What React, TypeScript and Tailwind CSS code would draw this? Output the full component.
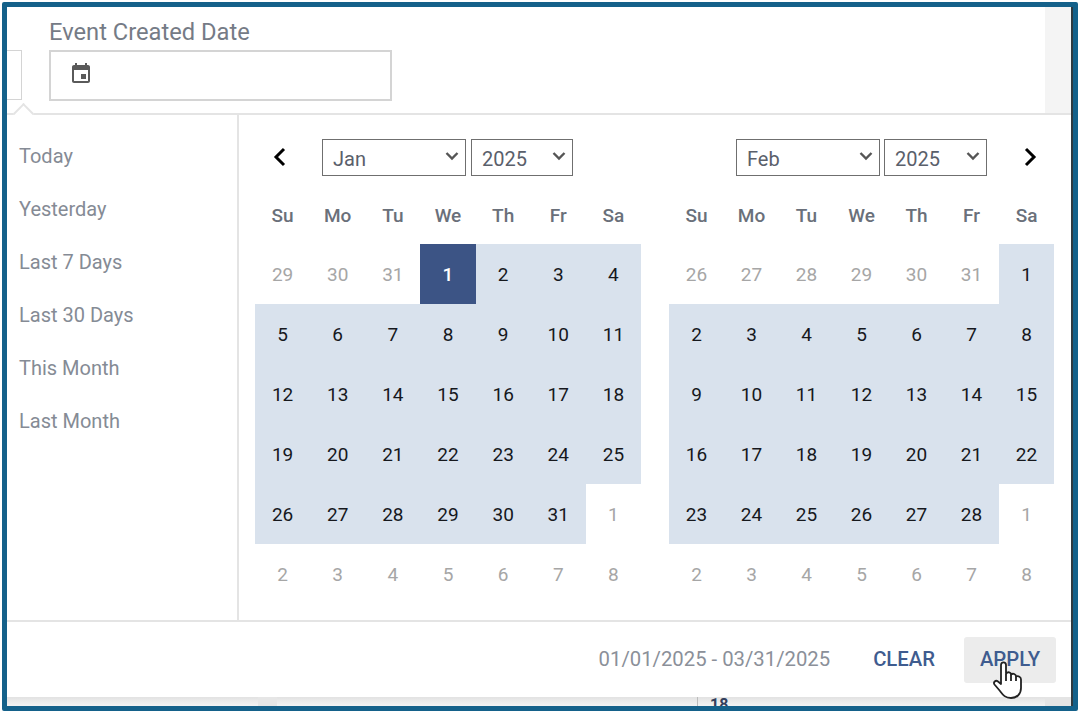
const weekdays = ["Su", "Mo", "Tu", "We", "Th", "Fr", "Sa"];
const presets = ["Today", "Yesterday", "Last 7 Days", "Last 30 Days", "This Month", "Last Month"];

type Day = { n: number; out?: boolean; start?: boolean };

function range(from: number, to: number, out?: boolean): Day[] {
  const days: Day[] = [];
  for (let i = from; i <= to; i++) days.push({ n: i, out });
  return days;
}

const jan: Day[] = [
  ...range(29, 31, true),
  { n: 1, start: true },
  ...range(2, 31),
  ...range(1, 8, true),
];
const feb: Day[] = [
  ...range(26, 31, true),
  ...range(1, 28),
  ...range(1, 8, true),
];

function Select({ label, width }: { label: string; width: string }) {
  return (
    <div className={`${width} h-[37px] border border-[#6f6f6f] flex items-center justify-between pl-[10px] pr-[5px] text-[20px] text-[#5a606b] bg-white`}>
      <span className="pt-[4px]">{label}</span>
      <svg width="16" height="16" viewBox="0 0 16 16" fill="none" stroke="#555" strokeWidth="2.4" className="mb-[3px]">
        <path d="M2.5 5l5.5 5.5L13.5 5" />
      </svg>
    </div>
  );
}

function Month({ days, width }: { days: Day[]; width: string }) {
  return (
    <div className={width}>
      <div className="grid grid-cols-7 h-[60px] pt-[4px] items-center text-center text-[19px] font-medium text-[#6a707a]">
        {weekdays.map((d) => (
          <span key={d}>{d}</span>
        ))}
      </div>
      <div className="grid grid-cols-7 auto-rows-[60px] text-[19px]">
        {days.map((d, i) => (
          <div
            key={i}
            className={
              "flex items-center justify-center pt-[2px] " +
              (d.start
                ? "bg-[#3c5485] text-white font-medium"
                : d.out
                  ? "text-[#a6a6a6]"
                  : "bg-[#d9e2ed] text-[#16181d]")
            }
          >
            {d.n}
          </div>
        ))}
      </div>
    </div>
  );
}

export default function App() {
  return (
    <div className="relative w-[1080px] h-[712px] bg-white pl-[2px] pt-[2px] font-['Roboto',sans-serif]">
      <div className="w-[1076px] h-[709px] border-[5px] border-[#14618a] rounded-[2px] bg-white overflow-hidden">
        <div className="h-full border-r-2 border-[#2f3a40] flex flex-col">
          {/* field row */}
          <div className="relative h-[108px] flex shrink-0 border-b-2 border-[#e4e4e4]">
            <div className="w-[15px] h-[50px] mt-[43px] border border-l-0 border-[#d4d4d4]" />
            <div className="pl-[27px] flex-1">
              <div className="h-[43px] pt-[10px] text-[23.7px] leading-[30px] text-[#757b86]">Event Created Date</div>
              <div className="w-[343px] h-[51px] border-2 border-[#d4d4d4] pl-[18px] flex items-center">
                <svg width="24" height="24" viewBox="0 0 24 24" fill="#5a5a5a" className="mb-[4px]">
                  <path d="M17 12h-5v5h5v-5zM16 1v2H8V1H6v2H5c-1.11 0-1.99.9-1.99 2L3 19c0 1.1.89 2 2 2h14c1.1 0 2-.9 2-2V5c0-1.1-.9-2-2-2h-1V1h-2zm3 18H5V8h14v11z" />
                </svg>
              </div>
            </div>
            <div className="w-[26px] bg-[#f4f4f4]" />
            {/* caret over the line */}
            <div className="absolute left-[9px] top-[99px] w-[15px] h-[15px] rotate-45 bg-white border-l-2 border-t-2 border-[#e4e4e4]" />
          </div>

          {/* calendar body */}
          <div className="flex h-[507px] shrink-0 border-b-2 border-[#e4e4e4]">
            <div className="w-[232px] border-r-2 border-[#e4e4e4] pl-[12px] pt-[14px] shrink-0">
              {presets.map((p) => (
                <div key={p} className="h-[53px] flex items-center text-[20px] text-[#858b95]">
                  {p}
                </div>
              ))}
            </div>
            <div className="flex-1 pl-[16px]">
              <div className="flex items-center h-[69px] pt-[15px] w-[800px]">
                <svg width="16" height="20" viewBox="0 0 16 20" fill="none" stroke="#000" strokeWidth="3" className="ml-[17px] mr-[34px]">
                  <path d="M12 2L4 10l8 8" />
                </svg>
                <Select label="Jan" width="w-[144px]" />
                <div className="w-[5px]" />
                <Select label="2025" width="w-[102px]" />
                <div className="w-[163px]" />
                <Select label="Feb" width="w-[144px]" />
                <div className="w-[4px]" />
                <Select label="2025" width="w-[103px]" />
                <svg width="16" height="20" viewBox="0 0 16 20" fill="none" stroke="#000" strokeWidth="3" className="ml-[35px]">
                  <path d="M4 2l8 8-8 8" />
                </svg>
              </div>
              <div className="flex gap-[28px]">
                <Month days={jan} width="w-[386px]" />
                <Month days={feb} width="w-[385px]" />
              </div>
            </div>
          </div>

          {/* footer */}
          <div className="h-[75px] flex items-center justify-end pr-[15px] shrink-0">
            <span className="text-[20.3px] text-[#8b9099] mr-[43px]">01/01/2025 - 03/31/2025</span>
            <span className="text-[20.3px] font-medium text-[#3f5c8f] mr-[29px]">CLEAR</span>
            <div className="w-[92px] h-[46px] rounded-[3px] bg-[#ececec] flex items-center justify-center text-[20.3px] font-medium text-[#3f5c8f]">
              APPLY
            </div>
          </div>

          {/* what's left of the page under the popup */}
          <div className="flex-1 flex overflow-hidden bg-linear-to-b from-[#e2e2e2] to-[#f3f3f3]">
            <div className="ml-[251px] w-[19px] bg-[#e6e6e6]" />
            <div className="ml-[420px] w-[1px] bg-[#bcbcbc]" />
            <div className="ml-[12px] text-[16px] leading-[16px] font-bold text-[#333f5c]">18</div>
            <div className="ml-auto w-[26px] bg-[#e4e4e4]" />
          </div>
        </div>
      </div>

      {/* mouse cursor */}
      <svg className="absolute left-[993px] top-[661px]" width="30" height="38" viewBox="0 0 30 38" fill="#fff" stroke="#222" strokeWidth="1.8" strokeLinejoin="round">
        <path d="M8 4C8 .5 13 .5 13 4v8.5C15 10.5 18 11 18 13.5c2-1.5 5-.5 5 2 2.5-1 5 .5 5 3V27c0 6-4 10-10 10-6 0-8-3-11-7l-5.5-6.5C0 21.5 2.5 18.5 5 20.5L8 23z" />
        <path d="M13 13v7M18 13.5V20M23 15.5V20" fill="none" />
      </svg>
    </div>
  );
}
